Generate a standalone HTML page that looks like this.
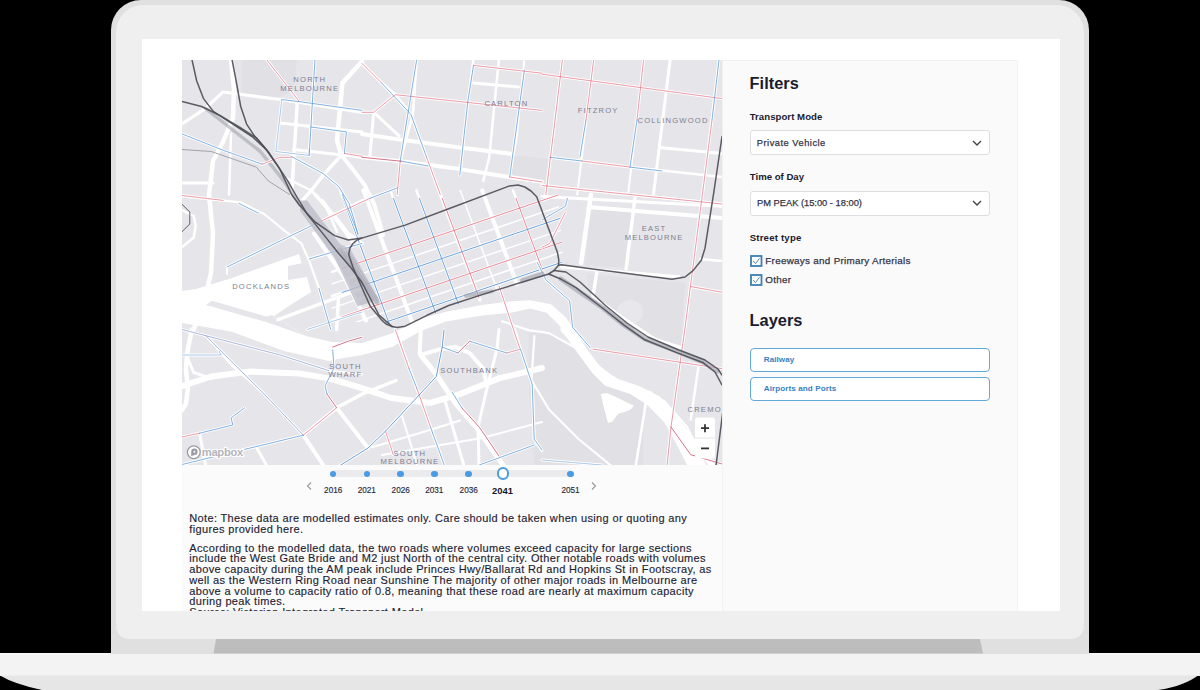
<!DOCTYPE html>
<html><head><meta charset="utf-8">
<style>
*{margin:0;padding:0;box-sizing:border-box}
html,body{width:1200px;height:690px;overflow:hidden;background:#000;font-family:"Liberation Sans",sans-serif;position:relative}
.abs{position:absolute}
.t{position:absolute;white-space:nowrap;line-height:1}
#lid{left:111px;top:0;width:978px;height:654px;background:#e0e0e0;border-radius:30px 30px 0 0}
#inner{left:115.5px;top:5px;width:968.5px;height:634px;background:#efefef;border-radius:27px 27px 13px 13px}
#screen{left:142px;top:39px;width:918px;height:572px;background:#fff}
#map{left:182px;top:59.5px;width:540px;height:405px;background:#e5e5e9;overflow:hidden}
#below{left:182px;top:464.5px;width:540px;height:146.5px;background:#fbfbfb}
#side{left:722px;top:60px;width:296px;height:551px;background:#fafafa;border:1px solid #f1f1f1;border-bottom:none}
.sel{position:absolute;left:749.7px;width:240px;height:25px;background:#fff;border:1px solid #dedee2;border-radius:3px}
.btn{position:absolute;left:749.7px;width:240.3px;height:23.8px;background:#fff;border:1.4px solid #62a9d8;border-radius:4px}
#clip{position:absolute;left:142px;top:39px;width:918px;height:572px;overflow:hidden}
#clip > *{}
</style></head><body>
<svg class="abs" style="left:0;top:0" width="1200" height="690">
  <rect x="0" y="653" width="1200" height="23" fill="#f3f3f3"/>
  <rect x="0" y="653" width="1200" height="1" fill="#fafafa"/>
  <path d="M0 675.5 L1200 675.5 L1200 674 Q1185 686 1158 690 L42 690 Q14 684 0 675.5 Z" fill="#e6e6e6"/>
</svg>
<div id="lid" class="abs"></div>
<div id="inner" class="abs"></div>
<svg class="abs" style="left:0;top:0" width="1200" height="690">
  <polygon points="216,639 980,639 983,653.5 213.5,653.5" fill="#bdbdbd"/>
</svg>
<div id="screen" class="abs"></div>
<div id="map" class="abs"><svg width="540" height="405" viewBox="0 0 540 405" style="display:block"><rect width="540" height="405" fill="#e6e6ea"/><path d="M60.0 0.0 L115.0 0.0 L112.0 30.0 L95.0 38.0 L60.0 35.0 Z" fill="#e0e0e5" fill-opacity="1"/><path d="M409.0 147.0 L451.0 150.0 L445.0 208.0 L403.0 205.0 Z" fill="#e0e0e5" fill-opacity="1"/><path d="M346.5 273.1 L367.0 271.6 L393.5 287.8 L423.0 320.1 L461.2 340.7 L461.2 405.0 L352.4 405.0 L346.5 320.1 Z" fill="#e0e0e5" fill-opacity="1"/><path d="M405.0 214.0 L503.0 223.0 L499.0 292.0 L473.0 281.0 L440.0 262.0 L408.0 240.0 Z" fill="#e0e0e5" fill-opacity="1"/><path d="M331.0 95.0 L366.0 99.0 L364.0 121.0 L329.0 117.0 Z" fill="#e0e0e5" fill-opacity="1"/><ellipse cx="448" cy="252" rx="13" ry="12" fill="#e8e8ec"/><path d="M0.0 231.0 L14.0 229.0 L27.0 225.0 L47.0 219.0 L117.0 194.0 L121.0 208.0 L106.0 213.0 L106.0 220.0 L125.0 217.0 L129.0 232.0 L110.0 244.0 L92.0 256.0 L124.0 276.0 L150.0 282.0 L180.0 283.0 L210.0 273.5 L240.0 258.5 L264.0 251.7 L300.0 245.0 L330.0 241.3 L348.0 240.2 L368.9 244.3 L383.5 256.9 L393.9 271.5 L404.4 288.2 L416.9 304.9 L431.5 317.4 L456.6 325.8 L477.4 336.2 L485.8 344.5 L500.0 365.0 L515.0 390.0 L522.0 405.0 L505.0 405.0 L495.0 385.0 L482.0 362.0 L464.9 344.5 L448.2 334.1 L423.2 325.8 L410.6 313.2 L398.1 296.5 L387.7 281.9 L377.2 265.2 L364.7 252.7 L348.0 248.5 L330.0 252.5 L300.0 255.5 L264.0 261.5 L240.0 270.5 L210.0 287.0 L180.0 295.0 L156.0 299.0 L147.0 301.0 L102.0 291.0 L49.0 271.5 L0.0 263.0 Z" fill="#ffffff" fill-opacity="1"/><path d="M24.0 245.0 L30.0 240.7 L84.0 256.5 L90.0 255.0 L124.0 276.0 L84.0 262.0 Z" fill="#e6e6ea" fill-opacity="1"/><path d="M106.0 206.0 L121.0 203.0 L121.0 213.0 L106.0 216.0 Z" fill="#e6e6ea" fill-opacity="1"/><path d="M418.7 334.1 L425.0 333.0 L436.0 338.0 L452.0 345.8 L448.0 350.0 L436.0 354.0 L430.0 362.0 L426.0 363.0 L423.0 352.0 Z" fill="#ffffff" fill-opacity="1"/><path d="M49.0 -1.0 L52.0 29.0 L51.0 58.0 L41.0 82.0 L31.0 101.0 L27.0 135.0 L31.0 173.6 L29.0 212.8 L21.5 244.0 L11.7 269.5 L9.8 269.5 L5.9 289.0 L3.9 308.6 L5.9 328.0 L3.9 344.0 L0.0 350.0" fill="none" stroke="#ffffff" stroke-width="4.5" stroke-opacity="1" stroke-linejoin="round" stroke-linecap="round" /><path d="M0.0 64.0 L23.5 48.4 L41.0 32.0 L102.0 40.0 L180.0 52.3 L191.7 52.3" fill="none" stroke="#ffffff" stroke-width="3.2" stroke-opacity="1" stroke-linejoin="round" stroke-linecap="round" /><path d="M0.0 123.0 L31.0 123.0" fill="none" stroke="#ffffff" stroke-width="3" stroke-opacity="1" stroke-linejoin="round" stroke-linecap="round" /><path d="M49.0 74.0 L47.0 134.5" fill="none" stroke="#ffffff" stroke-width="2.5" stroke-opacity="1" stroke-linejoin="round" stroke-linecap="round" /><path d="M115.4 40.6 L109.6 134.5" fill="none" stroke="#ffffff" stroke-width="3.5" stroke-opacity="1" stroke-linejoin="round" stroke-linecap="round" /><path d="M133.0 -1.0 L127.2 95.4" fill="none" stroke="#ffffff" stroke-width="2.5" stroke-opacity="1" stroke-linejoin="round" stroke-linecap="round" /><path d="M180.0 1.5 L160.4 23.0 L156.5 64.0 L155.0 80.0 L159.3 95.3" fill="none" stroke="#ffffff" stroke-width="4.5" stroke-opacity="1" stroke-linejoin="round" stroke-linecap="round" /><path d="M159.3 95.3 L171.0 109.6 L182.8 125.3 L191.9 143.5 L197.1 160.5 L201.0 175.0" fill="none" stroke="#ffffff" stroke-width="4" stroke-opacity="1" stroke-linejoin="round" stroke-linecap="round" /><path d="M159.3 95.3 L143.7 112.2 L129.3 130.5 L117.6 143.5" fill="none" stroke="#ffffff" stroke-width="3.5" stroke-opacity="1" stroke-linejoin="round" stroke-linecap="round" /><path d="M109.7 96.6 L141.0 113.5 L156.7 126.6 L167.1 143.5 L172.3 160.5 L176.0 175.0" fill="none" stroke="#ffffff" stroke-width="2.5" stroke-opacity="1" stroke-linejoin="round" stroke-linecap="round" /><path d="M105.8 118.8 L129.3 130.5 L142.3 143.5 L150.2 160.5 L155.0 172.0" fill="none" stroke="#ffffff" stroke-width="2.5" stroke-opacity="1" stroke-linejoin="round" stroke-linecap="round" /><path d="M180.0 140.4 L215.4 127.9" fill="none" stroke="#ffffff" stroke-width="2" stroke-opacity="1" stroke-linejoin="round" stroke-linecap="round" /><path d="M97.8 63.0 L180.0 72.0" fill="none" stroke="#ffffff" stroke-width="3" stroke-opacity="1" stroke-linejoin="round" stroke-linecap="round" /><path d="M111.5 89.5 L180.0 97.3" fill="none" stroke="#ffffff" stroke-width="3" stroke-opacity="1" stroke-linejoin="round" stroke-linecap="round" /><path d="M180.0 3.4 L199.6 23.0 L213.3 34.7 L228.9 54.3 L244.6 97.3 L258.3 134.5 L278.0 188.0 L298.0 240.0" fill="none" stroke="#ffffff" stroke-width="3" stroke-opacity="1" stroke-linejoin="round" stroke-linecap="round" /><path d="M234.8 -1.0 L230.9 54.3 L218.2 101.2 L215.2 134.5" fill="none" stroke="#ffffff" stroke-width="2.5" stroke-opacity="1" stroke-linejoin="round" stroke-linecap="round" /><path d="M180.0 73.9 L219.1 79.7 L277.8 87.5 L331.0 94.0" fill="none" stroke="#ffffff" stroke-width="4" stroke-opacity="1" stroke-linejoin="round" stroke-linecap="round" /><path d="M180.0 97.3 L219.1 101.2 L277.8 109.1 L326.7 117.0 L360.0 121.8" fill="none" stroke="#ffffff" stroke-width="4" stroke-opacity="1" stroke-linejoin="round" stroke-linecap="round" /><path d="M291.5 -1.0 L285.7 42.5 L277.8 115.0" fill="none" stroke="#ffffff" stroke-width="2.5" stroke-opacity="1" stroke-linejoin="round" stroke-linecap="round" /><path d="M317.0 -1.0 L307.2 97.3 L301.3 120.8" fill="none" stroke="#ffffff" stroke-width="2.5" stroke-opacity="1" stroke-linejoin="round" stroke-linecap="round" /><path d="M342.4 -1.0 L334.6 77.8 L327.7 117.0" fill="none" stroke="#ffffff" stroke-width="2" stroke-opacity="1" stroke-linejoin="round" stroke-linecap="round" /><path d="M291.5 23.0 L336.5 26.9" fill="none" stroke="#ffffff" stroke-width="3" stroke-opacity="1" stroke-linejoin="round" stroke-linecap="round" /><path d="M291.5 5.4 L360.0 13.2" fill="none" stroke="#ffffff" stroke-width="2" stroke-opacity="1" stroke-linejoin="round" stroke-linecap="round" /><path d="M191.7 52.3 L187.8 97.3" fill="none" stroke="#ffffff" stroke-width="3" stroke-opacity="1" stroke-linejoin="round" stroke-linecap="round" /><path d="M191.7 52.3 L217.2 75.8" fill="none" stroke="#ffffff" stroke-width="3" stroke-opacity="1" stroke-linejoin="round" stroke-linecap="round" /><path d="M380.5 -1.0 L363.9 134.5" fill="none" stroke="#ffffff" stroke-width="2.5" stroke-opacity="1" stroke-linejoin="round" stroke-linecap="round" /><path d="M411.8 -1.0 L395.2 134.5" fill="none" stroke="#ffffff" stroke-width="2" stroke-opacity="1" stroke-linejoin="round" stroke-linecap="round" /><path d="M461.7 -1.0 L446.1 134.5" fill="none" stroke="#ffffff" stroke-width="2" stroke-opacity="1" stroke-linejoin="round" stroke-linecap="round" /><path d="M488.2 -1.0 L471.5 134.5" fill="none" stroke="#ffffff" stroke-width="3" stroke-opacity="1" stroke-linejoin="round" stroke-linecap="round" /><path d="M537.1 -1.0 L520.4 134.5 L502.8 269.5 L489.0 367.0 L485.0 406.0" fill="none" stroke="#ffffff" stroke-width="2.5" stroke-opacity="1" stroke-linejoin="round" stroke-linecap="round" /><path d="M360.0 14.2 L540.0 38.6" fill="none" stroke="#ffffff" stroke-width="2" stroke-opacity="1" stroke-linejoin="round" stroke-linecap="round" /><path d="M477.4 87.5 L540.0 93.4" fill="none" stroke="#ffffff" stroke-width="3" stroke-opacity="1" stroke-linejoin="round" stroke-linecap="round" /><path d="M367.8 97.3 L448.0 107.1 L540.0 117.0" fill="none" stroke="#ffffff" stroke-width="2.5" stroke-opacity="1" stroke-linejoin="round" stroke-linecap="round" /><path d="M360.0 125.5 L540.0 144.0" fill="none" stroke="#ffffff" stroke-width="3" stroke-opacity="1" stroke-linejoin="round" stroke-linecap="round" /><path d="M0.0 150.0 L11.7 156.0 L13.7 165.8 L11.7 177.5 L0.0 187.0" fill="none" stroke="#ffffff" stroke-width="2.5" stroke-opacity="1" stroke-linejoin="round" stroke-linecap="round" /><path d="M0.0 136.5 L29.3 139.4 L58.7 142.3 L82.2 154.0 L103.7 171.7 L119.4 183.4 L127.2 201.0 L137.0 228.4 L148.7 269.5" fill="none" stroke="#ffffff" stroke-width="2.2" stroke-opacity="1" stroke-linejoin="round" stroke-linecap="round" /><path d="M45.0 207.0 L107.6 176.6 L133.0 164.0 L180.0 140.4" fill="none" stroke="#ffffff" stroke-width="2.5" stroke-opacity="1" stroke-linejoin="round" stroke-linecap="round" /><path d="M213.3 34.7 L360.0 50.4" fill="none" stroke="#ffffff" stroke-width="1.8" stroke-opacity="1" stroke-linejoin="round" stroke-linecap="round" /><path d="M133.0 134.5 L152.6 156.0 L166.3 173.6 L180.0 183.4" fill="none" stroke="#ffffff" stroke-width="3.5" stroke-opacity="1" stroke-linejoin="round" stroke-linecap="round" /><path d="M127.2 199.0 L180.0 183.4" fill="none" stroke="#ffffff" stroke-width="3" stroke-opacity="1" stroke-linejoin="round" stroke-linecap="round" /><path d="M96.0 259.7 L180.0 228.4" fill="none" stroke="#ffffff" stroke-width="3.5" stroke-opacity="1" stroke-linejoin="round" stroke-linecap="round" /><path d="M125.2 269.5 L180.0 252.0" fill="none" stroke="#ffffff" stroke-width="2" stroke-opacity="1" stroke-linejoin="round" stroke-linecap="round" /><path d="M156.5 238.0 L154.6 269.5" fill="none" stroke="#ffffff" stroke-width="3.5" stroke-opacity="1" stroke-linejoin="round" stroke-linecap="round" /><path d="M45.0 207.0 L45.0 214.0" fill="none" stroke="#ffffff" stroke-width="2" stroke-opacity="1" stroke-linejoin="round" stroke-linecap="round" /><path d="M360.0 136.5 L540.0 146.2" fill="none" stroke="#ffffff" stroke-width="3" stroke-opacity="1" stroke-linejoin="round" stroke-linecap="round" /><path d="M408.9 147.2 L516.5 156.0 L540.0 158.0" fill="none" stroke="#ffffff" stroke-width="4" stroke-opacity="1" stroke-linejoin="round" stroke-linecap="round" /><path d="M408.9 134.5 L399.1 203.0" fill="none" stroke="#ffffff" stroke-width="4.5" stroke-opacity="1" stroke-linejoin="round" stroke-linecap="round" /><path d="M452.9 138.4 L444.1 208.9" fill="none" stroke="#ffffff" stroke-width="3.5" stroke-opacity="1" stroke-linejoin="round" stroke-linecap="round" /><path d="M379.6 207.0 L497.0 216.7" fill="none" stroke="#ffffff" stroke-width="3" stroke-opacity="1" stroke-linejoin="round" stroke-linecap="round" /><path d="M414.8 212.8 L410.9 236.3 L442.0 259.0 L473.0 279.5 L498.0 288.0" fill="none" stroke="#ffffff" stroke-width="3.5" stroke-opacity="1" stroke-linejoin="round" stroke-linecap="round" /><path d="M132.0 173.5 L163.2 218.8 L184.0 260.5" fill="none" stroke="#ffffff" stroke-width="4" stroke-opacity="1" stroke-linejoin="round" stroke-linecap="round" /><path d="M140.6 140.5 L152.8 157.9 L170.2 182.2" fill="none" stroke="#ffffff" stroke-width="3" stroke-opacity="1" stroke-linejoin="round" stroke-linecap="round" /><path d="M518.0 199.0 L540.0 201.0" fill="none" stroke="#ffffff" stroke-width="2.5" stroke-opacity="1" stroke-linejoin="round" stroke-linecap="round" /><path d="M508.7 226.5 L540.0 232.3" fill="none" stroke="#ffffff" stroke-width="2.5" stroke-opacity="1" stroke-linejoin="round" stroke-linecap="round" /><path d="M0.0 326.2 L29.3 316.5 L68.5 311.6 L117.4 313.5 L146.7 318.4 L180.0 328.2 L209.3 338.0 L248.5 342.9 L277.8 334.1 L297.4 326.2 L317.0 318.4 L360.0 308.0" fill="none" stroke="#ffffff" stroke-width="6" stroke-opacity="1" stroke-linejoin="round" stroke-linecap="round" /><path d="M5.9 298.8 L11.7 312.5 L29.3 318.4" fill="none" stroke="#ffffff" stroke-width="3" stroke-opacity="1" stroke-linejoin="round" stroke-linecap="round" /><path d="M23.5 275.4 L48.9 304.7 L82.2 334.1 L121.3 375.2" fill="none" stroke="#ffffff" stroke-width="2" stroke-opacity="1" stroke-linejoin="round" stroke-linecap="round" /><path d="M121.3 375.2 L140.9 404.5" fill="none" stroke="#ffffff" stroke-width="4" stroke-opacity="1" stroke-linejoin="round" stroke-linecap="round" /><path d="M154.6 347.8 L186.0 388.0" fill="none" stroke="#ffffff" stroke-width="4" stroke-opacity="1" stroke-linejoin="round" stroke-linecap="round" /><path d="M186.0 388.0 L158.0 405.6" fill="none" stroke="#ffffff" stroke-width="2.2" stroke-opacity="1" stroke-linejoin="round" stroke-linecap="round" /><path d="M190.0 387.2 L248.7 369.8 L278.0 360.5" fill="none" stroke="#ffffff" stroke-width="2" stroke-opacity="1" stroke-linejoin="round" stroke-linecap="round" /><path d="M219.3 353.8 L235.3 405.6" fill="none" stroke="#ffffff" stroke-width="2" stroke-opacity="1" stroke-linejoin="round" stroke-linecap="round" /><path d="M121.3 375.2 L154.6 347.8 L180.0 334.1 L214.0 320.5" fill="none" stroke="#ffffff" stroke-width="3.5" stroke-opacity="1" stroke-linejoin="round" stroke-linecap="round" /><path d="M0.0 404.5 L121.3 375.2" fill="none" stroke="#ffffff" stroke-width="2.5" stroke-opacity="1" stroke-linejoin="round" stroke-linecap="round" /><path d="M17.6 373.2 L23.5 404.5" fill="none" stroke="#ffffff" stroke-width="3" stroke-opacity="1" stroke-linejoin="round" stroke-linecap="round" /><path d="M74.3 386.9 L84.1 404.5" fill="none" stroke="#ffffff" stroke-width="3" stroke-opacity="1" stroke-linejoin="round" stroke-linecap="round" /><path d="M0.0 269.5 L23.5 275.4 L97.8 294.9 L146.7 310.6 L180.0 314.5" fill="none" stroke="#ffffff" stroke-width="2" stroke-opacity="1" stroke-linejoin="round" stroke-linecap="round" /><path d="M238.7 294.9 L258.3 289.1 L273.9 287.1 L287.6 293.0 L301.3 308.6 L305.2 326.2" fill="none" stroke="#ffffff" stroke-width="4" stroke-opacity="1" stroke-linejoin="round" stroke-linecap="round" /><path d="M238.7 294.9 L254.3 314.5 L273.9 343.8 L297.4 371.2 L320.9 405.0" fill="none" stroke="#ffffff" stroke-width="5" stroke-opacity="1" stroke-linejoin="round" stroke-linecap="round" /><path d="M213.3 269.5 L234.8 328.2 L262.2 405.0" fill="none" stroke="#ffffff" stroke-width="3" stroke-opacity="1" stroke-linejoin="round" stroke-linecap="round" /><path d="M262.2 338.0 L281.7 405.0" fill="none" stroke="#ffffff" stroke-width="3" stroke-opacity="1" stroke-linejoin="round" stroke-linecap="round" /><path d="M317.0 269.5 L315.0 289.0 L305.0 328.0 L296.0 367.0 L297.0 405.0" fill="none" stroke="#ffffff" stroke-width="3" stroke-opacity="1" stroke-linejoin="round" stroke-linecap="round" /><path d="M332.6 269.5 L338.5 289.1 L350.2 324.3 L352.2 379.1 L360.0 390.8" fill="none" stroke="#ffffff" stroke-width="3" stroke-opacity="1" stroke-linejoin="round" stroke-linecap="round" /><path d="M238.7 269.5 L237.7 293.0" fill="none" stroke="#ffffff" stroke-width="4" stroke-opacity="1" stroke-linejoin="round" stroke-linecap="round" /><path d="M200.0 395.0 L300.0 378.0 L360.0 362.0" fill="none" stroke="#ffffff" stroke-width="2" stroke-opacity="1" stroke-linejoin="round" stroke-linecap="round" /><path d="M381.5 269.5 L399.1 289.1 L414.8 308.6 L438.3 324.3 L467.6 334.1 L487.2 351.7 L508.7 379.1 L516.5 386.9 L530.0 405.0" fill="none" stroke="#ffffff" stroke-width="6" stroke-opacity="1" stroke-linejoin="round" stroke-linecap="round" /><path d="M352.4 276.0 L349.4 320.1 L367.0 349.5 L396.5 379.0 L428.8 405.4" fill="none" stroke="#ffffff" stroke-width="2.2" stroke-opacity="1" stroke-linejoin="round" stroke-linecap="round" /><path d="M320.0 261.3 L346.5 270.1 L367.0 273.1 L393.5 287.8 L417.0 314.3 L434.7 326.0 L461.2 334.9 L481.8 340.7 L505.3 367.2 L523.0 405.4" fill="none" stroke="#ffffff" stroke-width="2.2" stroke-opacity="1" stroke-linejoin="round" stroke-linecap="round" /><path d="M463.7 343.8 L453.9 405.0" fill="none" stroke="#ffffff" stroke-width="2.5" stroke-opacity="1" stroke-linejoin="round" stroke-linecap="round" /><path d="M516.5 306.7 L508.7 359.5" fill="none" stroke="#ffffff" stroke-width="2.5" stroke-opacity="1" stroke-linejoin="round" stroke-linecap="round" /><path d="M453.9 269.5 L469.6 279.3 L497.0 287.1" fill="none" stroke="#ffffff" stroke-width="4" stroke-opacity="1" stroke-linejoin="round" stroke-linecap="round" /><clipPath id="cbd"><path d="M120 60 L370 60 L382 205 L368 216 L310 233.5 L267 247.5 L245 257.5 L223 268.5 L200 262 L120 262 Z"/></clipPath><g clip-path="url(#cbd)"><path d="M157.9 130.4 L213.4 280.4" fill="none" stroke="#ffffff" stroke-width="2.5" stroke-opacity="1" stroke-linejoin="round" stroke-linecap="round" /><path d="M181.4 130.4 L236.9 280.4" fill="none" stroke="#ffffff" stroke-width="4" stroke-opacity="1" stroke-linejoin="round" stroke-linecap="round" /><path d="M208.4 130.4 L263.9 280.4" fill="none" stroke="#ffffff" stroke-width="2.5" stroke-opacity="1" stroke-linejoin="round" stroke-linecap="round" /><path d="M234.4 130.4 L289.9 280.4" fill="none" stroke="#ffffff" stroke-width="2.5" stroke-opacity="1" stroke-linejoin="round" stroke-linecap="round" /><path d="M257.3 130.4 L312.8 280.4" fill="none" stroke="#ffffff" stroke-width="2.5" stroke-opacity="1" stroke-linejoin="round" stroke-linecap="round" /><path d="M278.3 130.4 L333.8 280.4" fill="none" stroke="#ffffff" stroke-width="1.5" stroke-opacity="1" stroke-linejoin="round" stroke-linecap="round" /><path d="M300.2 130.4 L355.7 280.4" fill="none" stroke="#ffffff" stroke-width="4" stroke-opacity="1" stroke-linejoin="round" stroke-linecap="round" /><path d="M331.0 130.4 L386.5 280.4" fill="none" stroke="#ffffff" stroke-width="2.5" stroke-opacity="1" stroke-linejoin="round" stroke-linecap="round" /><path d="M150.0 211.9 L380.0 133.7" fill="none" stroke="#ffffff" stroke-width="2.5" stroke-opacity="1" stroke-linejoin="round" stroke-linecap="round" /><path d="M150.0 235.9 L380.0 157.7" fill="none" stroke="#ffffff" stroke-width="2.5" stroke-opacity="1" stroke-linejoin="round" stroke-linecap="round" /><path d="M150.0 260.3 L380.0 182.1" fill="none" stroke="#ffffff" stroke-width="2.5" stroke-opacity="1" stroke-linejoin="round" stroke-linecap="round" /><path d="M150.0 280.4 L380.0 202.2" fill="none" stroke="#ffffff" stroke-width="2.5" stroke-opacity="1" stroke-linejoin="round" stroke-linecap="round" /><path d="M150.0 223.9 L380.0 145.7" fill="none" stroke="#ffffff" stroke-width="1.5" stroke-opacity="1" stroke-linejoin="round" stroke-linecap="round" /><path d="M150.0 248.1 L380.0 169.9" fill="none" stroke="#ffffff" stroke-width="1.5" stroke-opacity="1" stroke-linejoin="round" stroke-linecap="round" /><path d="M150.0 270.4 L380.0 192.2" fill="none" stroke="#ffffff" stroke-width="1.5" stroke-opacity="1" stroke-linejoin="round" stroke-linecap="round" /><path d="M160.9 138.4 L213.4 280.4" fill="none" stroke="#5b98d6" stroke-width="1.0" stroke-opacity="0.9" stroke-linejoin="round" stroke-linecap="round" /><path d="M211.4 138.4 L263.9 280.4" fill="none" stroke="#5b98d6" stroke-width="1.0" stroke-opacity="0.9" stroke-linejoin="round" stroke-linecap="round" /><path d="M237.4 138.4 L289.9 280.4" fill="none" stroke="#5b98d6" stroke-width="1.0" stroke-opacity="0.9" stroke-linejoin="round" stroke-linecap="round" /><path d="M260.3 138.4 L312.8 280.4" fill="none" stroke="#e57a8c" stroke-width="1.0" stroke-opacity="0.9" stroke-linejoin="round" stroke-linecap="round" /><path d="M334.0 138.4 L386.5 280.4" fill="none" stroke="#e57a8c" stroke-width="1.0" stroke-opacity="0.9" stroke-linejoin="round" stroke-linecap="round" /><path d="M160.0 208.5 L380.0 133.7" fill="none" stroke="#e57a8c" stroke-width="1.0" stroke-opacity="0.9" stroke-linejoin="round" stroke-linecap="round" /><path d="M160.0 232.5 L380.0 157.7" fill="none" stroke="#5b98d6" stroke-width="1.0" stroke-opacity="0.9" stroke-linejoin="round" stroke-linecap="round" /><path d="M160.0 256.9 L380.0 182.1" fill="none" stroke="#e57a8c" stroke-width="1.0" stroke-opacity="0.9" stroke-linejoin="round" stroke-linecap="round" /><path d="M160.0 277.0 L380.0 202.2" fill="none" stroke="#5b98d6" stroke-width="1.0" stroke-opacity="0.9" stroke-linejoin="round" stroke-linecap="round" /></g><path d="M23.5 48.4 L50.9 70.0 L78.3 91.5 L101.7 120.8 L118.0 145.0" fill="none" stroke="#9d9daa" stroke-width="3.5" stroke-opacity="0.55" stroke-linejoin="round" stroke-linecap="round" /><path d="M99.8 39.6 L117.4 41.6 L180.0 50.4" fill="none" stroke="#ffffff" stroke-width="2.8" stroke-opacity="1" stroke-linejoin="round" stroke-linecap="round" /><path d="M99.8 39.6 L93.9 91.5 L127.2 95.4 L127.2 89.5" fill="none" stroke="#ffffff" stroke-width="2.8" stroke-opacity="1" stroke-linejoin="round" stroke-linecap="round" /><path d="M0.0 73.9 L39.1 89.5 L80.2 104.2" fill="none" stroke="#ffffff" stroke-width="2.8" stroke-opacity="1" stroke-linejoin="round" stroke-linecap="round" /><path d="M80.2 104.2 L97.8 97.3 L109.6 97.3" fill="none" stroke="#ffffff" stroke-width="2.8" stroke-opacity="1" stroke-linejoin="round" stroke-linecap="round" /><path d="M109.7 96.6 L141.0 113.5 L156.7 126.6 L167.1 143.5 L172.3 160.5 L176.0 175.0" fill="none" stroke="#ffffff" stroke-width="2.8" stroke-opacity="1" stroke-linejoin="round" stroke-linecap="round" /><path d="M84.1 -1.0 L117.4 41.6" fill="none" stroke="#ffffff" stroke-width="2.8" stroke-opacity="1" stroke-linejoin="round" stroke-linecap="round" /><path d="M133.0 -1.0 L127.2 95.4" fill="none" stroke="#ffffff" stroke-width="2.8" stroke-opacity="1" stroke-linejoin="round" stroke-linecap="round" /><path d="M129.1 67.0 L164.4 71.9 L162.4 93.4" fill="none" stroke="#ffffff" stroke-width="2.8" stroke-opacity="1" stroke-linejoin="round" stroke-linecap="round" /><path d="M162.4 93.4 L180.0 96.4" fill="none" stroke="#ffffff" stroke-width="2.8" stroke-opacity="1" stroke-linejoin="round" stroke-linecap="round" /><path d="M180.0 52.3 L191.7 52.3 L213.3 34.7 L360.0 50.4" fill="none" stroke="#ffffff" stroke-width="2.8" stroke-opacity="1" stroke-linejoin="round" stroke-linecap="round" /><path d="M180.0 3.4 L199.6 23.0" fill="none" stroke="#ffffff" stroke-width="2.8" stroke-opacity="1" stroke-linejoin="round" stroke-linecap="round" /><path d="M199.6 23.0 L228.9 54.3 L244.6 97.3" fill="none" stroke="#ffffff" stroke-width="2.8" stroke-opacity="1" stroke-linejoin="round" stroke-linecap="round" /><path d="M244.6 97.3 L258.3 134.5" fill="none" stroke="#ffffff" stroke-width="2.8" stroke-opacity="1" stroke-linejoin="round" stroke-linecap="round" /><path d="M234.8 -1.0 L218.2 101.2" fill="none" stroke="#ffffff" stroke-width="2.8" stroke-opacity="1" stroke-linejoin="round" stroke-linecap="round" /><path d="M218.2 101.2 L215.2 134.5" fill="none" stroke="#ffffff" stroke-width="2.8" stroke-opacity="1" stroke-linejoin="round" stroke-linecap="round" /><path d="M180.0 97.3 L219.1 101.2" fill="none" stroke="#ffffff" stroke-width="2.8" stroke-opacity="1" stroke-linejoin="round" stroke-linecap="round" /><path d="M219.1 101.2 L246.0 106.0" fill="none" stroke="#ffffff" stroke-width="2.8" stroke-opacity="1" stroke-linejoin="round" stroke-linecap="round" /><path d="M291.5 5.4 L285.7 42.5 L277.8 115.0" fill="none" stroke="#ffffff" stroke-width="2.8" stroke-opacity="1" stroke-linejoin="round" stroke-linecap="round" /><path d="M342.4 10.0 L327.7 117.0" fill="none" stroke="#ffffff" stroke-width="2.8" stroke-opacity="1" stroke-linejoin="round" stroke-linecap="round" /><path d="M327.7 117.0 L360.0 122.0" fill="none" stroke="#ffffff" stroke-width="2.8" stroke-opacity="1" stroke-linejoin="round" stroke-linecap="round" /><path d="M291.5 5.4 L360.0 13.2" fill="none" stroke="#ffffff" stroke-width="2.8" stroke-opacity="1" stroke-linejoin="round" stroke-linecap="round" /><path d="M380.5 -1.0 L363.9 134.5" fill="none" stroke="#ffffff" stroke-width="2.8" stroke-opacity="1" stroke-linejoin="round" stroke-linecap="round" /><path d="M411.8 -1.0 L404.0 60.0" fill="none" stroke="#ffffff" stroke-width="2.8" stroke-opacity="1" stroke-linejoin="round" stroke-linecap="round" /><path d="M404.0 60.0 L398.0 97.0" fill="none" stroke="#ffffff" stroke-width="2.8" stroke-opacity="1" stroke-linejoin="round" stroke-linecap="round" /><path d="M461.7 -1.0 L455.0 60.0" fill="none" stroke="#ffffff" stroke-width="2.8" stroke-opacity="1" stroke-linejoin="round" stroke-linecap="round" /><path d="M455.0 60.0 L448.0 107.0" fill="none" stroke="#ffffff" stroke-width="2.8" stroke-opacity="1" stroke-linejoin="round" stroke-linecap="round" /><path d="M537.1 -1.0 L530.0 60.0" fill="none" stroke="#ffffff" stroke-width="2.8" stroke-opacity="1" stroke-linejoin="round" stroke-linecap="round" /><path d="M530.0 60.0 L520.4 134.5 L502.8 269.5 L489.0 367.0 L485.0 406.0" fill="none" stroke="#ffffff" stroke-width="2.8" stroke-opacity="1" stroke-linejoin="round" stroke-linecap="round" /><path d="M360.0 14.2 L540.0 38.6" fill="none" stroke="#ffffff" stroke-width="2.8" stroke-opacity="1" stroke-linejoin="round" stroke-linecap="round" /><path d="M367.8 97.3 L400.0 101.0" fill="none" stroke="#ffffff" stroke-width="2.8" stroke-opacity="1" stroke-linejoin="round" stroke-linecap="round" /><path d="M400.0 101.0 L448.0 107.1" fill="none" stroke="#ffffff" stroke-width="2.8" stroke-opacity="1" stroke-linejoin="round" stroke-linecap="round" /><path d="M448.0 107.1 L480.0 111.0" fill="none" stroke="#ffffff" stroke-width="2.8" stroke-opacity="1" stroke-linejoin="round" stroke-linecap="round" /><path d="M360.0 125.5 L540.0 144.0" fill="none" stroke="#ffffff" stroke-width="2.8" stroke-opacity="1" stroke-linejoin="round" stroke-linecap="round" /><path d="M0.0 135.5 L41.1 140.4" fill="none" stroke="#ffffff" stroke-width="2.8" stroke-opacity="1" stroke-linejoin="round" stroke-linecap="round" /><path d="M56.7 143.3 L76.3 153.1" fill="none" stroke="#ffffff" stroke-width="2.8" stroke-opacity="1" stroke-linejoin="round" stroke-linecap="round" /><path d="M45.0 207.0 L133.0 164.0" fill="none" stroke="#ffffff" stroke-width="2.8" stroke-opacity="1" stroke-linejoin="round" stroke-linecap="round" /><path d="M133.0 164.0 L188.0 138.3" fill="none" stroke="#ffffff" stroke-width="2.8" stroke-opacity="1" stroke-linejoin="round" stroke-linecap="round" /><path d="M188.0 138.3 L215.4 127.9" fill="none" stroke="#ffffff" stroke-width="2.8" stroke-opacity="1" stroke-linejoin="round" stroke-linecap="round" /><path d="M160.4 134.5 L176.1 173.6" fill="none" stroke="#ffffff" stroke-width="2.8" stroke-opacity="1" stroke-linejoin="round" stroke-linecap="round" /><path d="M127.2 199.0 L180.0 183.4" fill="none" stroke="#ffffff" stroke-width="2.8" stroke-opacity="1" stroke-linejoin="round" stroke-linecap="round" /><path d="M137.0 228.4 L148.7 269.5" fill="none" stroke="#ffffff" stroke-width="2.8" stroke-opacity="1" stroke-linejoin="round" stroke-linecap="round" /><path d="M125.2 269.5 L180.0 252.0" fill="none" stroke="#ffffff" stroke-width="2.8" stroke-opacity="1" stroke-linejoin="round" stroke-linecap="round" /><path d="M360.0 159.9 L383.5 146.2 L385.4 138.4" fill="none" stroke="#ffffff" stroke-width="2.8" stroke-opacity="1" stroke-linejoin="round" stroke-linecap="round" /><path d="M383.5 152.1 L367.8 183.4 L360.0 187.3" fill="none" stroke="#ffffff" stroke-width="2.8" stroke-opacity="1" stroke-linejoin="round" stroke-linecap="round" /><path d="M508.7 226.5 L540.0 232.3" fill="none" stroke="#ffffff" stroke-width="2.8" stroke-opacity="1" stroke-linejoin="round" stroke-linecap="round" /><path d="M150.7 287.1 L166.3 281.2 L180.0 277.3" fill="none" stroke="#ffffff" stroke-width="2.8" stroke-opacity="1" stroke-linejoin="round" stroke-linecap="round" /><path d="M150.7 290.0 L152.0 308.0 L143.0 326.0 L145.0 334.0" fill="none" stroke="#ffffff" stroke-width="2.8" stroke-opacity="1" stroke-linejoin="round" stroke-linecap="round" /><path d="M145.0 334.0 L154.6 347.8" fill="none" stroke="#ffffff" stroke-width="2.8" stroke-opacity="1" stroke-linejoin="round" stroke-linecap="round" /><path d="M121.3 375.2 L154.6 347.8" fill="none" stroke="#ffffff" stroke-width="2.8" stroke-opacity="1" stroke-linejoin="round" stroke-linecap="round" /><path d="M0.0 377.0 L17.6 373.2" fill="none" stroke="#ffffff" stroke-width="2.8" stroke-opacity="1" stroke-linejoin="round" stroke-linecap="round" /><path d="M17.6 373.2 L50.9 365.0 L49.0 358.0 L62.6 347.8" fill="none" stroke="#ffffff" stroke-width="2.8" stroke-opacity="1" stroke-linejoin="round" stroke-linecap="round" /><path d="M0.0 295.0 L39.0 295.0 L37.0 291.0" fill="none" stroke="#ffffff" stroke-width="2.8" stroke-opacity="1" stroke-linejoin="round" stroke-linecap="round" /><path d="M23.5 275.4 L82.2 334.1 L121.3 375.2" fill="none" stroke="#ffffff" stroke-width="2.8" stroke-opacity="1" stroke-linejoin="round" stroke-linecap="round" /><path d="M0.0 404.5 L121.3 375.2" fill="none" stroke="#ffffff" stroke-width="2.8" stroke-opacity="1" stroke-linejoin="round" stroke-linecap="round" /><path d="M0.0 269.5 L97.8 294.9 L146.7 310.6" fill="none" stroke="#ffffff" stroke-width="2.8" stroke-opacity="1" stroke-linejoin="round" stroke-linecap="round" /><path d="M213.3 269.5 L227.0 308.6" fill="none" stroke="#ffffff" stroke-width="2.8" stroke-opacity="1" stroke-linejoin="round" stroke-linecap="round" /><path d="M227.0 308.6 L234.8 328.2" fill="none" stroke="#ffffff" stroke-width="2.8" stroke-opacity="1" stroke-linejoin="round" stroke-linecap="round" /><path d="M234.8 328.2 L248.5 367.0" fill="none" stroke="#ffffff" stroke-width="2.8" stroke-opacity="1" stroke-linejoin="round" stroke-linecap="round" /><path d="M248.5 367.0 L262.2 405.0" fill="none" stroke="#ffffff" stroke-width="2.8" stroke-opacity="1" stroke-linejoin="round" stroke-linecap="round" /><path d="M158.0 405.6 L186.0 388.0 L203.5 371.2 L254.3 316.5 L260.2 287.1 L262.0 270.0" fill="none" stroke="#ffffff" stroke-width="2.8" stroke-opacity="1" stroke-linejoin="round" stroke-linecap="round" /><path d="M260.2 287.1 L275.9 293.0" fill="none" stroke="#ffffff" stroke-width="2.8" stroke-opacity="1" stroke-linejoin="round" stroke-linecap="round" /><path d="M275.9 293.0 L287.6 281.2" fill="none" stroke="#ffffff" stroke-width="2.8" stroke-opacity="1" stroke-linejoin="round" stroke-linecap="round" /><path d="M287.6 281.2 L324.8 293.0" fill="none" stroke="#ffffff" stroke-width="2.8" stroke-opacity="1" stroke-linejoin="round" stroke-linecap="round" /><path d="M324.8 293.0 L338.5 289.1" fill="none" stroke="#ffffff" stroke-width="2.8" stroke-opacity="1" stroke-linejoin="round" stroke-linecap="round" /><path d="M338.5 289.1 L350.2 324.3 L352.2 379.1 L360.0 390.0" fill="none" stroke="#ffffff" stroke-width="2.8" stroke-opacity="1" stroke-linejoin="round" stroke-linecap="round" /><path d="M270.0 332.0 L280.0 348.0" fill="none" stroke="#ffffff" stroke-width="2.8" stroke-opacity="1" stroke-linejoin="round" stroke-linecap="round" /><path d="M280.0 348.0 L297.4 367.3 L317.0 396.0" fill="none" stroke="#ffffff" stroke-width="2.8" stroke-opacity="1" stroke-linejoin="round" stroke-linecap="round" /><path d="M203.5 371.2 L211.3 394.7" fill="none" stroke="#ffffff" stroke-width="2.8" stroke-opacity="1" stroke-linejoin="round" stroke-linecap="round" /><path d="M297.4 405.0 L352.2 385.0" fill="none" stroke="#ffffff" stroke-width="2.8" stroke-opacity="1" stroke-linejoin="round" stroke-linecap="round" /><path d="M410.9 289.1 L540.0 308.6" fill="none" stroke="#ffffff" stroke-width="2.8" stroke-opacity="1" stroke-linejoin="round" stroke-linecap="round" /><path d="M489.0 367.0 L508.7 394.7 L540.0 404.0" fill="none" stroke="#ffffff" stroke-width="2.8" stroke-opacity="1" stroke-linejoin="round" stroke-linecap="round" /><path d="M360.0 400.0 L420.0 405.0" fill="none" stroke="#ffffff" stroke-width="2.8" stroke-opacity="1" stroke-linejoin="round" stroke-linecap="round" /><path d="M317.0 226.0 L337.6 287.8" fill="none" stroke="#ffffff" stroke-width="2.8" stroke-opacity="1" stroke-linejoin="round" stroke-linecap="round" /><path d="M355.3 202.5 L364.1 220.1 L387.6 240.7 L390.6 267.2 L408.2 287.8" fill="none" stroke="#ffffff" stroke-width="2.8" stroke-opacity="1" stroke-linejoin="round" stroke-linecap="round" /><path d="M99.8 39.6 L117.4 41.6 L180.0 50.4" fill="none" stroke="#5b98d6" stroke-width="0.9" stroke-opacity="0.85" stroke-linejoin="round" stroke-linecap="round" /><path d="M99.8 39.6 L93.9 91.5 L127.2 95.4 L127.2 89.5" fill="none" stroke="#8fb8e4" stroke-width="0.9" stroke-opacity="0.85" stroke-linejoin="round" stroke-linecap="round" /><path d="M0.0 73.9 L39.1 89.5 L80.2 104.2" fill="none" stroke="#5b98d6" stroke-width="0.9" stroke-opacity="0.85" stroke-linejoin="round" stroke-linecap="round" /><path d="M80.2 104.2 L97.8 97.3 L109.6 97.3" fill="none" stroke="#e57a8c" stroke-width="0.9" stroke-opacity="0.85" stroke-linejoin="round" stroke-linecap="round" /><path d="M109.7 96.6 L141.0 113.5 L156.7 126.6 L167.1 143.5 L172.3 160.5 L176.0 175.0" fill="none" stroke="#5b98d6" stroke-width="0.9" stroke-opacity="0.85" stroke-linejoin="round" stroke-linecap="round" /><path d="M84.1 -1.0 L117.4 41.6" fill="none" stroke="#e57a8c" stroke-width="0.9" stroke-opacity="0.85" stroke-linejoin="round" stroke-linecap="round" /><path d="M133.0 -1.0 L127.2 95.4" fill="none" stroke="#5b98d6" stroke-width="0.9" stroke-opacity="0.85" stroke-linejoin="round" stroke-linecap="round" /><path d="M129.1 67.0 L164.4 71.9 L162.4 93.4" fill="none" stroke="#5b98d6" stroke-width="0.9" stroke-opacity="0.85" stroke-linejoin="round" stroke-linecap="round" /><path d="M162.4 93.4 L180.0 96.4" fill="none" stroke="#e57a8c" stroke-width="0.9" stroke-opacity="0.85" stroke-linejoin="round" stroke-linecap="round" /><path d="M180.0 52.3 L191.7 52.3 L213.3 34.7 L360.0 50.4" fill="none" stroke="#e57a8c" stroke-width="0.9" stroke-opacity="0.85" stroke-linejoin="round" stroke-linecap="round" /><path d="M180.0 3.4 L199.6 23.0" fill="none" stroke="#e57a8c" stroke-width="0.9" stroke-opacity="0.85" stroke-linejoin="round" stroke-linecap="round" /><path d="M199.6 23.0 L228.9 54.3 L244.6 97.3" fill="none" stroke="#5b98d6" stroke-width="0.9" stroke-opacity="0.85" stroke-linejoin="round" stroke-linecap="round" /><path d="M244.6 97.3 L258.3 134.5" fill="none" stroke="#e57a8c" stroke-width="0.9" stroke-opacity="0.85" stroke-linejoin="round" stroke-linecap="round" /><path d="M234.8 -1.0 L218.2 101.2" fill="none" stroke="#5b98d6" stroke-width="0.9" stroke-opacity="0.85" stroke-linejoin="round" stroke-linecap="round" /><path d="M218.2 101.2 L215.2 134.5" fill="none" stroke="#e57a8c" stroke-width="0.9" stroke-opacity="0.85" stroke-linejoin="round" stroke-linecap="round" /><path d="M180.0 97.3 L219.1 101.2" fill="none" stroke="#c44a63" stroke-width="0.9" stroke-opacity="0.85" stroke-linejoin="round" stroke-linecap="round" /><path d="M219.1 101.2 L246.0 106.0" fill="none" stroke="#5b98d6" stroke-width="0.9" stroke-opacity="0.85" stroke-linejoin="round" stroke-linecap="round" /><path d="M291.5 5.4 L285.7 42.5 L277.8 115.0" fill="none" stroke="#5b98d6" stroke-width="0.9" stroke-opacity="0.85" stroke-linejoin="round" stroke-linecap="round" /><path d="M342.4 10.0 L327.7 117.0" fill="none" stroke="#5b98d6" stroke-width="0.9" stroke-opacity="0.85" stroke-linejoin="round" stroke-linecap="round" /><path d="M327.7 117.0 L360.0 122.0" fill="none" stroke="#e57a8c" stroke-width="0.9" stroke-opacity="0.85" stroke-linejoin="round" stroke-linecap="round" /><path d="M291.5 5.4 L360.0 13.2" fill="none" stroke="#e57a8c" stroke-width="0.9" stroke-opacity="0.85" stroke-linejoin="round" stroke-linecap="round" /><path d="M380.5 -1.0 L363.9 134.5" fill="none" stroke="#e57a8c" stroke-width="0.9" stroke-opacity="0.85" stroke-linejoin="round" stroke-linecap="round" /><path d="M411.8 -1.0 L404.0 60.0" fill="none" stroke="#e57a8c" stroke-width="0.9" stroke-opacity="0.85" stroke-linejoin="round" stroke-linecap="round" /><path d="M404.0 60.0 L398.0 97.0" fill="none" stroke="#5b98d6" stroke-width="0.9" stroke-opacity="0.85" stroke-linejoin="round" stroke-linecap="round" /><path d="M461.7 -1.0 L455.0 60.0" fill="none" stroke="#e57a8c" stroke-width="0.9" stroke-opacity="0.85" stroke-linejoin="round" stroke-linecap="round" /><path d="M455.0 60.0 L448.0 107.0" fill="none" stroke="#5b98d6" stroke-width="0.9" stroke-opacity="0.85" stroke-linejoin="round" stroke-linecap="round" /><path d="M537.1 -1.0 L530.0 60.0" fill="none" stroke="#5b98d6" stroke-width="0.9" stroke-opacity="0.85" stroke-linejoin="round" stroke-linecap="round" /><path d="M530.0 60.0 L520.4 134.5 L502.8 269.5 L489.0 367.0 L485.0 406.0" fill="none" stroke="#e57a8c" stroke-width="0.9" stroke-opacity="0.85" stroke-linejoin="round" stroke-linecap="round" /><path d="M360.0 14.2 L540.0 38.6" fill="none" stroke="#e57a8c" stroke-width="0.9" stroke-opacity="0.85" stroke-linejoin="round" stroke-linecap="round" /><path d="M367.8 97.3 L400.0 101.0" fill="none" stroke="#5b98d6" stroke-width="0.9" stroke-opacity="0.85" stroke-linejoin="round" stroke-linecap="round" /><path d="M400.0 101.0 L448.0 107.1" fill="none" stroke="#e57a8c" stroke-width="0.9" stroke-opacity="0.85" stroke-linejoin="round" stroke-linecap="round" /><path d="M448.0 107.1 L480.0 111.0" fill="none" stroke="#5b98d6" stroke-width="0.9" stroke-opacity="0.85" stroke-linejoin="round" stroke-linecap="round" /><path d="M360.0 125.5 L540.0 144.0" fill="none" stroke="#e57a8c" stroke-width="0.9" stroke-opacity="0.85" stroke-linejoin="round" stroke-linecap="round" /><path d="M0.0 135.5 L41.1 140.4" fill="none" stroke="#e57a8c" stroke-width="0.9" stroke-opacity="0.85" stroke-linejoin="round" stroke-linecap="round" /><path d="M56.7 143.3 L76.3 153.1" fill="none" stroke="#5b98d6" stroke-width="0.9" stroke-opacity="0.85" stroke-linejoin="round" stroke-linecap="round" /><path d="M45.0 207.0 L133.0 164.0" fill="none" stroke="#5b98d6" stroke-width="0.9" stroke-opacity="0.85" stroke-linejoin="round" stroke-linecap="round" /><path d="M133.0 164.0 L188.0 138.3" fill="none" stroke="#e57a8c" stroke-width="0.9" stroke-opacity="0.85" stroke-linejoin="round" stroke-linecap="round" /><path d="M188.0 138.3 L215.4 127.9" fill="none" stroke="#5b98d6" stroke-width="0.9" stroke-opacity="0.85" stroke-linejoin="round" stroke-linecap="round" /><path d="M160.4 134.5 L176.1 173.6" fill="none" stroke="#5b98d6" stroke-width="0.9" stroke-opacity="0.85" stroke-linejoin="round" stroke-linecap="round" /><path d="M127.2 199.0 L180.0 183.4" fill="none" stroke="#5b98d6" stroke-width="0.9" stroke-opacity="0.85" stroke-linejoin="round" stroke-linecap="round" /><path d="M137.0 228.4 L148.7 269.5" fill="none" stroke="#5b98d6" stroke-width="0.9" stroke-opacity="0.85" stroke-linejoin="round" stroke-linecap="round" /><path d="M125.2 269.5 L180.0 252.0" fill="none" stroke="#8fb8e4" stroke-width="0.9" stroke-opacity="0.85" stroke-linejoin="round" stroke-linecap="round" /><path d="M360.0 159.9 L383.5 146.2 L385.4 138.4" fill="none" stroke="#5b98d6" stroke-width="0.9" stroke-opacity="0.85" stroke-linejoin="round" stroke-linecap="round" /><path d="M383.5 152.1 L367.8 183.4 L360.0 187.3" fill="none" stroke="#e57a8c" stroke-width="0.9" stroke-opacity="0.85" stroke-linejoin="round" stroke-linecap="round" /><path d="M508.7 226.5 L540.0 232.3" fill="none" stroke="#e57a8c" stroke-width="0.9" stroke-opacity="0.85" stroke-linejoin="round" stroke-linecap="round" /><path d="M150.7 287.1 L166.3 281.2 L180.0 277.3" fill="none" stroke="#c44a63" stroke-width="0.9" stroke-opacity="0.85" stroke-linejoin="round" stroke-linecap="round" /><path d="M150.7 290.0 L152.0 308.0 L143.0 326.0 L145.0 334.0" fill="none" stroke="#5b98d6" stroke-width="0.9" stroke-opacity="0.85" stroke-linejoin="round" stroke-linecap="round" /><path d="M145.0 334.0 L154.6 347.8" fill="none" stroke="#c44a63" stroke-width="0.9" stroke-opacity="0.85" stroke-linejoin="round" stroke-linecap="round" /><path d="M121.3 375.2 L154.6 347.8" fill="none" stroke="#e57a8c" stroke-width="0.9" stroke-opacity="0.85" stroke-linejoin="round" stroke-linecap="round" /><path d="M0.0 377.0 L17.6 373.2" fill="none" stroke="#e57a8c" stroke-width="0.9" stroke-opacity="0.85" stroke-linejoin="round" stroke-linecap="round" /><path d="M17.6 373.2 L50.9 365.0 L49.0 358.0 L62.6 347.8" fill="none" stroke="#5b98d6" stroke-width="0.9" stroke-opacity="0.85" stroke-linejoin="round" stroke-linecap="round" /><path d="M0.0 295.0 L39.0 295.0 L37.0 291.0" fill="none" stroke="#8fb8e4" stroke-width="0.9" stroke-opacity="0.85" stroke-linejoin="round" stroke-linecap="round" /><path d="M23.5 275.4 L82.2 334.1 L121.3 375.2" fill="none" stroke="#7f9fd0" stroke-width="0.9" stroke-opacity="0.85" stroke-linejoin="round" stroke-linecap="round" /><path d="M0.0 404.5 L121.3 375.2" fill="none" stroke="#5b98d6" stroke-width="0.9" stroke-opacity="0.85" stroke-linejoin="round" stroke-linecap="round" /><path d="M0.0 269.5 L97.8 294.9 L146.7 310.6" fill="none" stroke="#8f9fd0" stroke-width="0.9" stroke-opacity="0.85" stroke-linejoin="round" stroke-linecap="round" /><path d="M213.3 269.5 L227.0 308.6" fill="none" stroke="#e57a8c" stroke-width="0.9" stroke-opacity="0.85" stroke-linejoin="round" stroke-linecap="round" /><path d="M227.0 308.6 L234.8 328.2" fill="none" stroke="#5b98d6" stroke-width="0.9" stroke-opacity="0.85" stroke-linejoin="round" stroke-linecap="round" /><path d="M234.8 328.2 L248.5 367.0" fill="none" stroke="#e57a8c" stroke-width="0.9" stroke-opacity="0.85" stroke-linejoin="round" stroke-linecap="round" /><path d="M248.5 367.0 L262.2 405.0" fill="none" stroke="#5b98d6" stroke-width="0.9" stroke-opacity="0.85" stroke-linejoin="round" stroke-linecap="round" /><path d="M158.0 405.6 L186.0 388.0 L203.5 371.2 L254.3 316.5 L260.2 287.1 L262.0 270.0" fill="none" stroke="#3f7fc4" stroke-width="0.9" stroke-opacity="0.85" stroke-linejoin="round" stroke-linecap="round" /><path d="M260.2 287.1 L275.9 293.0" fill="none" stroke="#5b98d6" stroke-width="0.9" stroke-opacity="0.85" stroke-linejoin="round" stroke-linecap="round" /><path d="M275.9 293.0 L287.6 281.2" fill="none" stroke="#c44a63" stroke-width="0.9" stroke-opacity="0.85" stroke-linejoin="round" stroke-linecap="round" /><path d="M287.6 281.2 L324.8 293.0" fill="none" stroke="#5b98d6" stroke-width="0.9" stroke-opacity="0.85" stroke-linejoin="round" stroke-linecap="round" /><path d="M324.8 293.0 L338.5 289.1" fill="none" stroke="#e57a8c" stroke-width="0.9" stroke-opacity="0.85" stroke-linejoin="round" stroke-linecap="round" /><path d="M338.5 289.1 L350.2 324.3 L352.2 379.1 L360.0 390.0" fill="none" stroke="#5b98d6" stroke-width="0.9" stroke-opacity="0.85" stroke-linejoin="round" stroke-linecap="round" /><path d="M270.0 332.0 L280.0 348.0" fill="none" stroke="#5b98d6" stroke-width="0.9" stroke-opacity="0.85" stroke-linejoin="round" stroke-linecap="round" /><path d="M280.0 348.0 L297.4 367.3 L317.0 396.0" fill="none" stroke="#c44a63" stroke-width="0.9" stroke-opacity="0.85" stroke-linejoin="round" stroke-linecap="round" /><path d="M203.5 371.2 L211.3 394.7" fill="none" stroke="#e57a8c" stroke-width="0.9" stroke-opacity="0.85" stroke-linejoin="round" stroke-linecap="round" /><path d="M297.4 405.0 L352.2 385.0" fill="none" stroke="#5b98d6" stroke-width="0.9" stroke-opacity="0.85" stroke-linejoin="round" stroke-linecap="round" /><path d="M410.9 289.1 L540.0 308.6" fill="none" stroke="#e57a8c" stroke-width="0.9" stroke-opacity="0.85" stroke-linejoin="round" stroke-linecap="round" /><path d="M489.0 367.0 L508.7 394.7 L540.0 404.0" fill="none" stroke="#c44a63" stroke-width="0.9" stroke-opacity="0.85" stroke-linejoin="round" stroke-linecap="round" /><path d="M360.0 400.0 L420.0 405.0" fill="none" stroke="#8fb8e4" stroke-width="0.9" stroke-opacity="0.85" stroke-linejoin="round" stroke-linecap="round" /><path d="M317.0 226.0 L337.6 287.8" fill="none" stroke="#e57a8c" stroke-width="0.9" stroke-opacity="0.85" stroke-linejoin="round" stroke-linecap="round" /><path d="M355.3 202.5 L364.1 220.1 L387.6 240.7 L390.6 267.2 L408.2 287.8" fill="none" stroke="#5b98d6" stroke-width="0.9" stroke-opacity="0.85" stroke-linejoin="round" stroke-linecap="round" /><path d="M158.0 190.0 L176.0 215.0 L195.0 242.0" fill="none" stroke="#9d9daa" stroke-width="5" stroke-opacity="0.6" stroke-linejoin="round" stroke-linecap="round" /><path d="M340.6 220.5 L360.2 214.0" fill="none" stroke="#9d9daa" stroke-width="5" stroke-opacity="0.6" stroke-linejoin="round" stroke-linecap="round" /><path d="M284.0 235.7 L310.0 231.4" fill="none" stroke="#9d9daa" stroke-width="4" stroke-opacity="0.6" stroke-linejoin="round" stroke-linecap="round" /><path d="M379.0 219.0 L421.0 248.0 L442.0 265.0 L463.0 279.0 L494.0 291.0 L521.0 302.0 L535.0 311.0" fill="none" stroke="#9d9daa" stroke-width="5" stroke-opacity="0.6" stroke-linejoin="round" stroke-linecap="round" /><path d="M118.0 140.5 L125.0 140.5 L158.0 184.0 L168.4 189.2 L196.3 237.9 L191.0 241.4 L175.4 246.6 L152.8 197.9 L118.0 151.0 Z" fill="#b9b9c6" fill-opacity="0.75"/><path d="M160.0 192.0 L176.0 218.0 L190.0 240.0" fill="none" stroke="#9a9aa8" stroke-width="0.6" stroke-opacity="0.8" stroke-linejoin="round" stroke-linecap="round" /><path d="M162.2 192.0 L178.2 218.0 L192.2 240.0" fill="none" stroke="#9a9aa8" stroke-width="0.6" stroke-opacity="0.8" stroke-linejoin="round" stroke-linecap="round" /><path d="M164.4 192.0 L180.4 218.0 L194.4 240.0" fill="none" stroke="#9a9aa8" stroke-width="0.6" stroke-opacity="0.8" stroke-linejoin="round" stroke-linecap="round" /><path d="M166.6 192.0 L182.6 218.0 L196.6 240.0" fill="none" stroke="#9a9aa8" stroke-width="0.6" stroke-opacity="0.8" stroke-linejoin="round" stroke-linecap="round" /><path d="M179.7 178.1 L223.2 165.1 L266.7 148.8 L327.6 125.9 L336.0 125.0 L342.8 127.0 L349.0 131.0 L354.7 136.8 L375.4 192.2 L376.8 200.0 L376.5 205.3 L372.0 210.5 L366.7 214.0 L310.2 231.4 L266.7 245.5 L245.0 255.3 L223.2 266.2 L215.0 267.5 L210.2 266.6 L204.0 264.0 L199.3 259.6 L188.4 246.6 L171.0 207.5 L166.7 194.4 L168.0 188.0 L171.0 183.5 L175.0 180.0 L179.7 178.1" fill="none" stroke="#4e4e57" stroke-width="1.5" stroke-opacity="0.92" stroke-linejoin="round" stroke-linecap="round" /><path d="M9.8 -1.0 L14.7 21.0 L21.5 38.6 L31.3 51.4 L50.9 64.1 L70.4 76.8 L84.1 89.5 L93.9 103.2 L105.7 120.8 L113.5 134.5 L125.2 154.1 L140.9 173.6 L156.5 193.2 L168.3 206.9 L180.0 222.5 L197.0 255.0 L210.2 266.6" fill="none" stroke="#4e4e57" stroke-width="1.5" stroke-opacity="0.92" stroke-linejoin="round" stroke-linecap="round" /><path d="M49.9 -1.0 L53.8 19.1 L58.7 46.5 L64.6 64.1 L72.4 75.8 L84.1 89.5" fill="none" stroke="#4e4e57" stroke-width="1.5" stroke-opacity="0.92" stroke-linejoin="round" stroke-linecap="round" /><path d="M0.0 41.6 L19.6 46.5 L39.1 56.2 L58.7 68.0 L74.3 77.8 L86.1 91.5 L97.8 109.1 L109.6 134.5 L117.4 145.0 L133.0 161.9 L152.6 175.6 L166.3 180.0 L179.7 178.1" fill="none" stroke="#4e4e57" stroke-width="1.5" stroke-opacity="0.92" stroke-linejoin="round" stroke-linecap="round" /><path d="M376.5 205.3 L379.3 204.7 L410.6 208.9 L490.0 219.3 L503.0 217.0 L510.8 210.9 L519.2 200.5 L523.0 188.2 L531.8 132.4 L540.0 76.5" fill="none" stroke="#4e4e57" stroke-width="1.5" stroke-opacity="0.92" stroke-linejoin="round" stroke-linecap="round" /><path d="M366.7 214.0 L379.3 219.3 L393.9 227.6 L421.1 248.5 L442.0 265.2 L462.8 279.8 L494.1 292.4 L521.3 302.8 L533.0 312.0 L540.0 325.0" fill="none" stroke="#4e4e57" stroke-width="1.5" stroke-opacity="0.92" stroke-linejoin="round" stroke-linecap="round" /><path d="M372.0 210.5 L384.0 212.0 L398.0 222.0 L424.0 246.0 L445.0 263.0 L466.0 277.0 L497.0 290.0 L523.0 300.0 L536.0 309.0 L540.0 315.0" fill="none" stroke="#4e4e57" stroke-width="1.5" stroke-opacity="0.92" stroke-linejoin="round" stroke-linecap="round" /><path d="M541.0 350.0 L534.1 405.0" fill="none" stroke="#4e4e57" stroke-width="1.5" stroke-opacity="0.92" stroke-linejoin="round" stroke-linecap="round" /><path d="M0.0 171.7 L7.8 163.9 L7.8 152.1 L0.0 144.3" fill="none" stroke="#4e4e57" stroke-width="1.0" stroke-opacity="0.92" stroke-linejoin="round" stroke-linecap="round" /><path d="M0.0 89.5 L29.3 91.5 L74.3 107.1 L86.1 120.8 L107.6 134.5" fill="none" stroke="#8f8f9c" stroke-width="0.8" stroke-opacity="1" stroke-linejoin="round" stroke-linecap="round" /><text x="127.8" y="22.200000000000003" text-anchor="middle" font-family="Liberation Sans" font-size="7.6" letter-spacing="1.2" fill="#7d7d92">NORTH</text><text x="127.8" y="31.200000000000003" text-anchor="middle" font-family="Liberation Sans" font-size="7.6" letter-spacing="1.2" fill="#7d7d92">MELBOURNE</text><text x="324.4" y="46.4" text-anchor="middle" font-family="Liberation Sans" font-size="7.6" letter-spacing="1.2" fill="#7d7d92">CARLTON</text><text x="416.2" y="52.800000000000004" text-anchor="middle" font-family="Liberation Sans" font-size="7.6" letter-spacing="1.2" fill="#7d7d92">FITZROY</text><text x="491.1" y="63.4" text-anchor="middle" font-family="Liberation Sans" font-size="7.6" letter-spacing="1.2" fill="#7d7d92">COLLINGWOOD</text><text x="472.1" y="171.1" text-anchor="middle" font-family="Liberation Sans" font-size="7.6" letter-spacing="1.2" fill="#7d7d92">EAST</text><text x="472.1" y="179.9" text-anchor="middle" font-family="Liberation Sans" font-size="7.6" letter-spacing="1.2" fill="#7d7d92">MELBOURNE</text><text x="79.2" y="229.4" text-anchor="middle" font-family="Liberation Sans" font-size="7.6" letter-spacing="1.2" fill="#7d7d92">DOCKLANDS</text><text x="163.4" y="308.6" text-anchor="middle" font-family="Liberation Sans" font-size="7.6" letter-spacing="1.2" fill="#7d7d92">SOUTH</text><text x="163.4" y="317.40000000000003" text-anchor="middle" font-family="Liberation Sans" font-size="7.6" letter-spacing="1.2" fill="#7d7d92">WHARF</text><text x="287.2" y="313.1" text-anchor="middle" font-family="Liberation Sans" font-size="7.6" letter-spacing="1.2" fill="#7d7d92">SOUTHBANK</text><text x="227.9" y="395.6" text-anchor="middle" font-family="Liberation Sans" font-size="7.6" letter-spacing="1.2" fill="#7d7d92">SOUTH</text><text x="227.9" y="404.1" text-anchor="middle" font-family="Liberation Sans" font-size="7.6" letter-spacing="1.2" fill="#7d7d92">MELBOURNE</text><text x="505.5" y="352.3" font-family="Liberation Sans" font-size="7.6" letter-spacing="1.2" fill="#7d7d92">CREMORNE</text><g><circle cx="11.8" cy="392.2" r="6.4" fill="#fff" stroke="#9c9ca4" stroke-width="1.3"/><path d="M9.2 396.2 L9.2 391.8 A3.2 3.2 0 1 1 12.4 395 Z" fill="#9c9ca4"/><circle cx="12.4" cy="391.8" r="1" fill="#fff"/><text x="19.8" y="396.4" font-family="Liberation Sans" font-weight="700" font-size="11.2" fill="#b4b4bc" stroke="#ffffff" stroke-width="2.2" paint-order="stroke" stroke-linejoin="round" letter-spacing="-0.3">mapbox</text></g><g><rect x="513" y="357.5" width="20" height="41" rx="2.5" fill="#fff"/><line x1="513" y1="378" x2="533" y2="378" fill="none" stroke="#e6e6e6" stroke-width="1"/><path d="M519 368.2 H527 M523 364.2 V372.2" stroke="#333" stroke-width="1.8"/><path d="M519 388.4 H527" stroke="#333" stroke-width="1.8"/></g></svg></div>
<div id="below" class="abs"></div>
<div id="side" class="abs"></div>
<div id="clip"><div style="position:absolute;left:-142px;top:-39px;width:1200px;height:690px">
<div class="t" style="left:749.60px;top:74.89px;font-size:16.3px;font-weight:700;color:#1b1b2f;letter-spacing:0.05px;">Filters</div>
<div class="t" style="left:749.70px;top:111.94px;font-size:9.6px;font-weight:700;color:#1b1b2f;letter-spacing:0.05px;">Transport Mode</div>
<div class="sel" style="top:130.3px"></div>
<div class="t" style="left:756.80px;top:139.00px;font-size:9.3px;font-weight:400;color:#353545;letter-spacing:0.5px;-webkit-text-stroke:0.25px #353545;">Private Vehicle</div>
<div class="t" style="left:749.80px;top:172.14px;font-size:9.6px;font-weight:700;color:#1b1b2f;letter-spacing:0.0px;">Time of Day</div>
<div class="sel" style="top:190.6px"></div>
<div class="t" style="left:757.00px;top:199.40px;font-size:9.3px;font-weight:400;color:#353545;letter-spacing:0.0px;-webkit-text-stroke:0.25px #353545;">PM PEAK (15:00 - 18:00)</div>
<svg class="abs" style="left:971px;top:139px" width="12" height="8"><path d="M2 2 L6 6 L10 2" fill="none" stroke="#444" stroke-width="1.4"/></svg>
<svg class="abs" style="left:971px;top:199.3px" width="12" height="8"><path d="M2 2 L6 6 L10 2" fill="none" stroke="#444" stroke-width="1.4"/></svg>
<div class="t" style="left:749.70px;top:233.04px;font-size:9.6px;font-weight:700;color:#1b1b2f;letter-spacing:0.2px;">Street type</div>
<svg class="abs" style="left:749.5px;top:254.9px" width="13" height="12"><rect x="1" y="1" width="10.5" height="10" fill="#fff" stroke="#3b7fae" stroke-width="1.8"/><path d="M3.2 6 L5.5 8.6 L9.5 3.3" fill="none" stroke="#3b7fae" stroke-width="0.9"/></svg>
<svg class="abs" style="left:749.5px;top:274.0px" width="13" height="12"><rect x="1" y="1" width="10.5" height="10" fill="#fff" stroke="#3b7fae" stroke-width="1.8"/><path d="M3.2 6 L5.5 8.6 L9.5 3.3" fill="none" stroke="#3b7fae" stroke-width="0.9"/></svg>
<div class="t" style="left:765.30px;top:256.03px;font-size:9.85px;font-weight:400;color:#353545;letter-spacing:0.29px;-webkit-text-stroke:0.25px #353545;">Freeways and Primary Arterials</div>
<div class="t" style="left:765.30px;top:274.83px;font-size:9.85px;font-weight:400;color:#353545;letter-spacing:0.3px;-webkit-text-stroke:0.25px #353545;">Other</div>
<div class="t" style="left:749.60px;top:311.86px;font-size:16.4px;font-weight:700;color:#1b1b2f;letter-spacing:0.0px;">Layers</div>
<div class="btn" style="top:348.2px"></div>
<div class="t" style="left:763.80px;top:355.92px;font-size:8.1px;font-weight:700;color:#3a7fc2;letter-spacing:0.05px;">Railway</div>
<div class="btn" style="top:376.9px"></div>
<div class="t" style="left:763.80px;top:384.51px;font-size:8.1px;font-weight:700;color:#3a7fc2;letter-spacing:0.08px;">Airports and Ports</div>
<div class="abs" style="left:333px;top:470.1px;width:237px;height:7px;background:#ebebee"></div>
<div class="abs" style="left:329.90px;top:470.70px;width:6.6px;height:6.6px;border-radius:50%;background:#4a9be3"></div>
<div class="t" style="left:318.20px;top:486.83px;width:30px;text-align:center;font-size:8.2px;color:#2b2b3b;-webkit-text-stroke:0.15px #2b2b3b">2016</div>
<div class="abs" style="left:363.50px;top:470.70px;width:6.6px;height:6.6px;border-radius:50%;background:#4a9be3"></div>
<div class="t" style="left:351.80px;top:486.83px;width:30px;text-align:center;font-size:8.2px;color:#2b2b3b;-webkit-text-stroke:0.15px #2b2b3b">2021</div>
<div class="abs" style="left:397.40px;top:470.70px;width:6.6px;height:6.6px;border-radius:50%;background:#4a9be3"></div>
<div class="t" style="left:385.70px;top:486.83px;width:30px;text-align:center;font-size:8.2px;color:#2b2b3b;-webkit-text-stroke:0.15px #2b2b3b">2026</div>
<div class="abs" style="left:431.00px;top:470.70px;width:6.6px;height:6.6px;border-radius:50%;background:#4a9be3"></div>
<div class="t" style="left:419.30px;top:486.83px;width:30px;text-align:center;font-size:8.2px;color:#2b2b3b;-webkit-text-stroke:0.15px #2b2b3b">2031</div>
<div class="abs" style="left:465.40px;top:470.70px;width:6.6px;height:6.6px;border-radius:50%;background:#4a9be3"></div>
<div class="t" style="left:453.70px;top:486.83px;width:30px;text-align:center;font-size:8.2px;color:#2b2b3b;-webkit-text-stroke:0.15px #2b2b3b">2036</div>
<div class="abs" style="left:567.20px;top:470.70px;width:6.6px;height:6.6px;border-radius:50%;background:#4a9be3"></div>
<div class="t" style="left:555.50px;top:486.83px;width:30px;text-align:center;font-size:8.2px;color:#2b2b3b;-webkit-text-stroke:0.15px #2b2b3b">2051</div>
<div class="abs" style="left:496.6px;top:467.3px;width:12.4px;height:12.4px;border-radius:50%;background:#fff;border:2.2px solid #4a9be3"></div>
<div class="t" style="left:487.50px;top:485.81px;width:30px;text-align:center;font-size:9.4px;font-weight:700;color:#141424">2041</div>
<svg class="abs" style="left:305px;top:481px" width="8" height="10"><path d="M6 1.5 L2.5 5 L6 8.5" fill="none" stroke="#999" stroke-width="1.1"/></svg>
<svg class="abs" style="left:590px;top:481px" width="8" height="10"><path d="M2 1.5 L5.5 5 L2 8.5" fill="none" stroke="#999" stroke-width="1.1"/></svg>
<div class="t" style="left:189.30px;top:512.95px;font-size:11px;font-weight:400;color:#1e1e34;letter-spacing:0.35px;-webkit-text-stroke:0.15px #1e1e34;">Note: These data are modelled estimates only. Care should be taken when using or quoting any</div>
<div class="t" style="left:189.30px;top:523.72px;font-size:11px;font-weight:400;color:#1e1e34;letter-spacing:0.35px;-webkit-text-stroke:0.15px #1e1e34;">figures provided here.</div>
<div class="t" style="left:189.30px;top:542.55px;font-size:11px;font-weight:400;color:#1e1e34;letter-spacing:0.35px;-webkit-text-stroke:0.15px #1e1e34;">According to the modelled data, the two roads where volumes exceed capacity for large sections</div>
<div class="t" style="left:189.30px;top:553.32px;font-size:11px;font-weight:400;color:#1e1e34;letter-spacing:0.35px;-webkit-text-stroke:0.15px #1e1e34;">include the West Gate Bride and M2 just North of the central city. Other notable roads with volumes</div>
<div class="t" style="left:189.30px;top:564.09px;font-size:11px;font-weight:400;color:#1e1e34;letter-spacing:0.35px;-webkit-text-stroke:0.15px #1e1e34;">above capacity during the AM peak include Princes Hwy/Ballarat Rd and Hopkins St in Footscray, as</div>
<div class="t" style="left:189.30px;top:574.86px;font-size:11px;font-weight:400;color:#1e1e34;letter-spacing:0.35px;-webkit-text-stroke:0.15px #1e1e34;">well as the Western Ring Road near Sunshine The majority of other major roads in Melbourne are</div>
<div class="t" style="left:189.30px;top:585.63px;font-size:11px;font-weight:400;color:#1e1e34;letter-spacing:0.35px;-webkit-text-stroke:0.15px #1e1e34;">above a volume to capacity ratio of 0.8, meaning that these road are nearly at maximum capacity</div>
<div class="t" style="left:189.30px;top:596.40px;font-size:11px;font-weight:400;color:#1e1e34;letter-spacing:0.35px;-webkit-text-stroke:0.15px #1e1e34;">during peak times.</div>
<div class="t" style="left:189.30px;top:607.17px;font-size:11px;font-weight:400;color:#1e1e34;letter-spacing:0.35px;-webkit-text-stroke:0.15px #1e1e34;">Source: Victorian Integrated Transport Model</div>

</div></div>
</body></html>
